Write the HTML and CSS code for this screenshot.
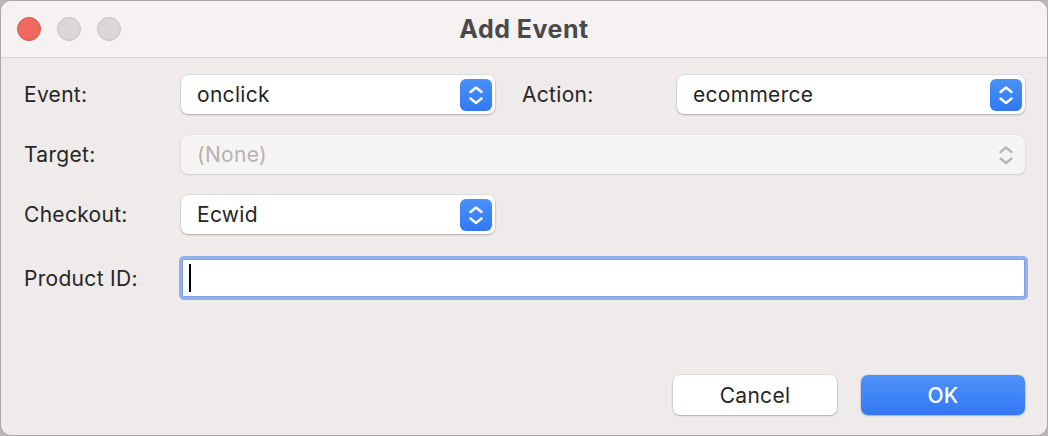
FILE: index.html
```html
<!DOCTYPE html>
<html lang="en">
<head>
    <meta charset="UTF-8">
    <title>Add Event</title>
    <link rel="stylesheet" href="styles.css">
</head>
<body>
    <div class="window">
        <div class="titlebar">
            <div class="lights">
                <span class="light close"></span>
                <span class="light"></span>
                <span class="light"></span>
            </div>
            <div class="title">Add Event</div>
        </div>

        <div class="content">
            <div class="row">
                <label class="label">Event:</label>
                <div class="popup short">
                    <span class="value">onclick</span>
                    <span class="stepper">
                        <svg width="32" height="32" viewBox="0 0 32 32"><path d="M10.5 13 L16 8.5 L21.5 13 M10.5 19.5 L16 24 L21.5 19.5" /></svg>
                    </span>
                </div>
                <label class="label action">Action:</label>
                <div class="popup grow">
                    <span class="value">ecommerce</span>
                    <span class="stepper">
                        <svg width="32" height="32" viewBox="0 0 32 32"><path d="M10.5 13 L16 8.5 L21.5 13 M10.5 19.5 L16 24 L21.5 19.5" /></svg>
                    </span>
                </div>
            </div>

            <div class="row">
                <label class="label">Target:</label>
                <div class="popup grow disabled">
                    <span class="value">(None)</span>
                    <span class="stepper">
                        <svg width="32" height="32" viewBox="0 0 32 32"><path d="M10.5 13 L16 8.5 L21.5 13 M10.5 19.5 L16 24 L21.5 19.5" /></svg>
                    </span>
                </div>
            </div>

            <div class="row">
                <label class="label">Checkout:</label>
                <div class="popup short">
                    <span class="value">Ecwid</span>
                    <span class="stepper">
                        <svg width="32" height="32" viewBox="0 0 32 32"><path d="M10.5 13 L16 8.5 L21.5 13 M10.5 19.5 L16 24 L21.5 19.5" /></svg>
                    </span>
                </div>
            </div>

            <div class="row field-row">
                <label class="label">Product ID:</label>
                <div class="field"><span class="caret"></span></div>
            </div>
        </div>

        <div class="buttons">
            <button type="button" class="btn">Cancel</button>
            <button type="button" class="btn primary">OK</button>
        </div>
    </div>
</body>
</html>
```

FILE: styles.css
```css
html, body {
    margin: 0;
    height: 100%;
}
body {
    background: #b9b6b5;
    font-family: Inter, "Noto Sans", sans-serif;
    color: #262626;
}
.window {
    box-sizing: border-box;
    width: 1048px;
    height: 436px;
    background: #efebea;
    border: 1px solid #a9a6a5;
    border-radius: 11px;
    overflow: hidden;
    display: flex;
    flex-direction: column;
}
.titlebar {
    height: 56px;
    background: #f6f2f2;
    border-bottom: 1px solid #d8d4d3;
    position: relative;
    display: flex;
    align-items: center;
    justify-content: center;
    flex-shrink: 0;
}
.lights {
    position: absolute;
    left: 16px;
    top: 16px;
    display: flex;
    gap: 16px;
}
.light {
    box-sizing: border-box;
    width: 24px;
    height: 24px;
    border-radius: 50%;
    background: #dcd7d6;
    border: 1px solid #c7c2c1;
}
.light.close {
    background: #ee6a5f;
    border-color: #d8554b;
}
.title {
    font-size: 25px;
    font-weight: 700;
    color: #4b4a4a;
    letter-spacing: 0.5px;
}
.content {
    padding: 17px 22px 0 23px;
    display: flex;
    flex-direction: column;
    gap: 21px;
}
.row {
    display: flex;
    align-items: center;
    height: 39px;
}
.field-row {
    margin-top: 4px;
    height: 38px;
}
.label {
    width: 157px;
    flex-shrink: 0;
    font-size: 21px;
    letter-spacing: 0.3px;
}
.label.action {
    margin-left: 27px;
    width: 155px;
}
.popup {
    box-sizing: border-box;
    height: 39px;
    background: #ffffff;
    border-radius: 7px;
    box-shadow: 0 0 0 0.5px rgba(0, 0, 0, 0.12), 0 1px 2px rgba(0, 0, 0, 0.22);
    display: flex;
    align-items: center;
    justify-content: space-between;
    padding: 0 3px 0 16px;
    font-size: 21px;
    letter-spacing: 0.3px;
}
.popup.short {
    width: 314px;
}
.popup.grow {
    flex: 1;
}
.stepper {
    width: 32px;
    height: 32px;
    border-radius: 6px;
    background: linear-gradient(#4b90f8, #2f79f5);
    display: flex;
}
.stepper path {
    fill: none;
    stroke: #ffffff;
    stroke-width: 2.4;
    stroke-linecap: round;
    stroke-linejoin: round;
}
.popup.disabled {
    background: #f7f5f4;
    box-shadow: 0 0 0 0.5px rgba(0, 0, 0, 0.06), 0 1px 2px rgba(0, 0, 0, 0.1);
    color: #b5b2b1;
}
.popup.disabled .stepper {
    background: none;
}
.popup.disabled .stepper path {
    stroke: #b8b5b4;
}
.field {
    flex: 1;
    box-sizing: border-box;
    height: 38px;
    margin-left: 1px;
    background: #ffffff;
    border: 1px solid #809fe5;
    border-radius: 2px;
    box-shadow: 0 0 0 3px #93b0ee;
    display: flex;
    align-items: center;
    padding-left: 6px;
}
.caret {
    width: 2px;
    height: 28px;
    background: #000000;
}
.buttons {
    margin-top: auto;
    display: flex;
    justify-content: flex-end;
    gap: 24px;
    padding: 0 22px 20px 0;
}
.btn {
    width: 164px;
    height: 40px;
    border: none;
    border-radius: 7px;
    background: #ffffff;
    box-shadow: 0 0 0 0.5px rgba(0, 0, 0, 0.12), 0 1px 2px rgba(0, 0, 0, 0.22);
    font-family: Inter, "Noto Sans", sans-serif;
    font-size: 21px;
    letter-spacing: 0.3px;
    color: #262626;
}
.btn.primary {
    background: linear-gradient(#4e92f8, #3378f6);
    color: #ffffff;
    font-weight: 500;
}
```
